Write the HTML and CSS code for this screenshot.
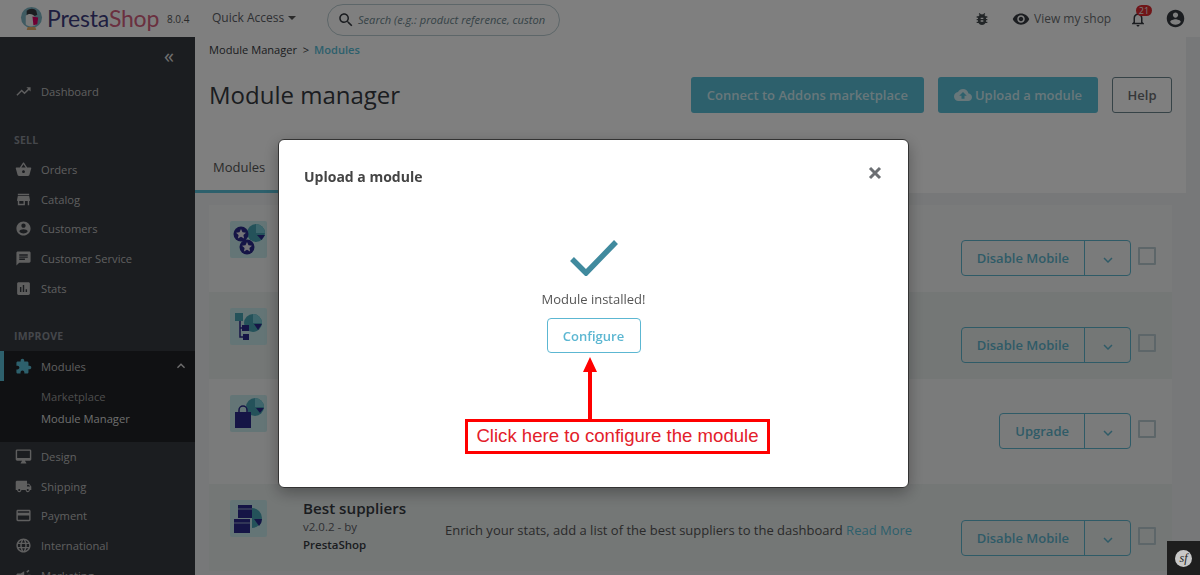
FILE: index.html
```html
<!DOCTYPE html>
<html>
<head>
    <title>Module manager</title>
    <link rel="stylesheet" href="styles.css">
</head>
<body>
    <header class="topbar">
        <svg class="logo" viewBox="0 0 24 26">
            <circle cx="12" cy="12" r="11" fill="#7fb6c4"/>
            <path d="M7 5c3-3 8-3 10 0l1 4-2 1-9 0z" fill="#363a41"/>
            <path d="M6 10c3-3 8-2 9 1l2 8c-2 3-9 3-11 0z" fill="#f4f4f4"/>
            <path d="M13 11l6 1-1 7-4 1z" fill="#df0067"/>
            <path d="M8 22h8l1 3H7z" fill="#e8b06a"/>
        </svg>
        <span class="brand"><b>Presta</b><i>Shop</i></span>
        <span class="version">8.0.4</span>
        <span class="quick">Quick Access <span class="caret"></span></span>
        <div class="search">
            <svg class="ico" viewBox="0 0 24 24"><path d="M15.5 14h-.79l-.28-.27C15.41 12.59 16 11.11 16 9.5 16 5.91 13.09 3 9.5 3S3 5.91 3 9.5 5.91 16 9.5 16c1.61 0 3.09-.59 4.23-1.57l.27.28v.79l5 4.99L20.49 19l-4.99-5zm-6 0C7.01 14 5 11.99 5 9.5S7.01 5 9.5 5 14 7.01 14 9.5 11.99 14 9.5 14z"/></svg>
            <span class="placeholder">Search (e.g.: product reference, custon</span>
        </div>
        <div class="top-right">
            <svg class="ico bug" viewBox="0 0 24 24"><path d="M20 8h-2.81c-.45-.78-1.07-1.45-1.82-1.96L17 4.41 15.59 3l-2.17 2.17C12.96 5.06 12.49 5 12 5c-.49 0-.96.06-1.41.17L8.41 3 7 4.41l1.62 1.63C7.88 6.55 7.26 7.22 6.81 8H4v2h2.09c-.05.33-.09.66-.09 1v1H4v2h2v1c0 .34.04.67.09 1H4v2h2.81c1.04 1.79 2.97 3 5.19 3s4.15-1.21 5.19-3H20v-2h-2.09c.05-.33.09-.66.09-1v-1h2v-2h-2v-1c0-.34-.04-.67-.09-1H20V8zm-6 8h-4v-2h4v2zm0-4h-4v-2h4v2z"/></svg>
            <svg class="ico eye" viewBox="0 0 24 24"><path d="M12 4.5C7 4.5 2.73 7.61 1 12c1.73 4.39 6 7.5 11 7.5s9.27-3.11 11-7.5c-1.73-4.39-6-7.5-11-7.5zM12 17c-2.76 0-5-2.24-5-5s2.24-5 5-5 5 2.24 5 5-2.24 5-5 5zm0-8c-1.66 0-3 1.34-3 3s1.34 3 3 3 3-1.34 3-3-1.34-3-3-3z"/></svg>
            <span class="view-shop">View my shop</span>
            <div class="bell">
                <svg class="ico" viewBox="0 0 24 24"><path d="M12 22c1.1 0 2-.9 2-2h-4c0 1.1.9 2 2 2zm6-6v-5c0-3.07-1.63-5.64-4.5-6.32V4c0-.83-.67-1.5-1.5-1.5s-1.5.67-1.5 1.5v.68C7.64 5.36 6 7.92 6 11v5l-2 2v1h16v-1l-2-2zm-2 1H8v-6c0-2.48 1.51-4.5 4-4.5s4 2.02 4 4.5v6z"/></svg>
                <span class="badge">21</span>
            </div>
            <svg class="ico avatar" viewBox="0 0 24 24"><path d="M12 2C6.48 2 2 6.48 2 12s4.48 10 10 10 10-4.48 10-10S17.52 2 12 2zm0 3c1.66 0 3 1.34 3 3s-1.34 3-3 3-3-1.34-3-3 1.34-3 3-3zm0 14.2c-2.5 0-4.71-1.28-6-3.22.03-1.99 4-3.08 6-3.08 1.99 0 5.97 1.09 6 3.08-1.29 1.94-3.5 3.22-6 3.22z"/></svg>
        </div>
    </header>

    <div class="layout">
        <nav class="sidebar">
            <div class="collapse">«</div>
            <div class="nav-item"><svg viewBox="0 0 24 24"><path d="M16 6l2.29 2.29-4.88 4.88-4-4L2 16.59 3.41 18l6-6 4 4 6.3-6.29L22 12V6z"/></svg>Dashboard</div>

            <div class="nav-title">SELL</div>
            <div class="nav-item"><svg viewBox="0 0 24 24"><path d="M17.21 9l-4.38-6.56c-.19-.28-.51-.42-.83-.42-.32 0-.64.14-.83.43L6.79 9H2c-.55 0-1 .45-1 1 0 .09.01.18.04.27l2.54 9.27c.23.84 1 1.46 1.92 1.46h13c.92 0 1.69-.62 1.93-1.46l2.54-9.27L23 10c0-.55-.45-1-1-1h-4.79zM9 9l3-4.4L15 9H9zm3 8c-1.1 0-2-.9-2-2s.9-2 2-2 2 .9 2 2-.9 2-2 2z"/></svg>Orders</div>
            <div class="nav-item"><svg viewBox="0 0 24 24"><path d="M20 4H4v2h16V4zm1 10v-2l-1-5H4l-1 5v2h1v6h10v-6h4v6h2v-6h1zm-9 4H6v-4h6v4z"/></svg>Catalog</div>
            <div class="nav-item"><svg viewBox="0 0 24 24"><path d="M12 2C6.48 2 2 6.48 2 12s4.48 10 10 10 10-4.48 10-10S17.52 2 12 2zm0 3c1.66 0 3 1.34 3 3s-1.34 3-3 3-3-1.34-3-3 1.34-3 3-3zm0 14.2c-2.5 0-4.71-1.28-6-3.22.03-1.99 4-3.08 6-3.08 1.99 0 5.97 1.09 6 3.08-1.29 1.94-3.5 3.22-6 3.22z"/></svg>Customers</div>
            <div class="nav-item"><svg viewBox="0 0 24 24"><path d="M20 2H4c-1.1 0-1.99.9-1.99 2L2 22l4-4h14c1.1 0 2-.9 2-2V4c0-1.1-.9-2-2-2zM6 9h12v2H6V9zm8 5H6v-2h8v2zm4-6H6V6h12v2z"/></svg>Customer Service</div>
            <div class="nav-item"><svg viewBox="0 0 24 24"><path d="M19 3H5c-1.1 0-2 .9-2 2v14c0 1.1.9 2 2 2h14c1.1 0 2-.9 2-2V5c0-1.1-.9-2-2-2zM9 17H7v-7h2v7zm4 0h-2V7h2v10zm4 0h-2v-4h2v4z"/></svg>Stats</div>

            <div class="nav-title">IMPROVE</div>
            <div class="nav-open">
                <div class="nav-item active">
                    <svg viewBox="0 0 24 24"><path d="M20.5 11H19V7c0-1.1-.9-2-2-2h-4V3.5C13 2.12 11.88 1 10.5 1S8 2.12 8 3.5V5H4c-1.1 0-1.99.9-1.99 2v3.8H3.5c1.49 0 2.7 1.21 2.7 2.7s-1.21 2.7-2.7 2.7H2V20c0 1.1.9 2 2 2h3.8v-1.5c0-1.49 1.21-2.7 2.7-2.7 1.49 0 2.7 1.21 2.7 2.7V22H17c1.1 0 2-.9 2-2v-4h1.5c1.38 0 2.5-1.12 2.5-2.5S21.88 11 20.5 11z"/></svg>
                    Modules
                    <svg class="chev-up" viewBox="0 0 24 24"><path d="M7.41 15.41L12 10.83l4.59 4.58L18 14l-6-6-6 6z"/></svg>
                </div>
                <div class="sub-item">Marketplace</div>
                <div class="sub-item current">Module Manager</div>
            </div>
            <div class="nav-item"><svg viewBox="0 0 24 24"><path d="M21 2H3c-1.1 0-2 .9-2 2v12c0 1.1.9 2 2 2h7l-2 3v1h8v-1l-2-3h7c1.1 0 2-.9 2-2V4c0-1.1-.9-2-2-2zm0 12H3V4h18v10z"/></svg>Design</div>
            <div class="nav-item"><svg viewBox="0 0 24 24"><path d="M20 8h-3V4H3c-1.1 0-2 .9-2 2v11h2c0 1.66 1.34 3 3 3s3-1.34 3-3h6c0 1.66 1.34 3 3 3s3-1.34 3-3h2v-5l-3-4zM6 18.5c-.83 0-1.5-.67-1.5-1.5s.67-1.5 1.5-1.5 1.5.67 1.5 1.5-.67 1.5-1.5 1.5zm13.5-9l1.96 2.5H17V9.5h2.5zm-1.5 9c-.83 0-1.5-.67-1.5-1.5s.67-1.5 1.5-1.5 1.5.67 1.5 1.5-.67 1.5-1.5 1.5z"/></svg>Shipping</div>
            <div class="nav-item"><svg viewBox="0 0 24 24"><path d="M20 4H4c-1.11 0-1.99.89-1.99 2L2 18c0 1.11.89 2 2 2h16c1.11 0 2-.89 2-2V6c0-1.11-.89-2-2-2zm0 14H4v-6h16v6zm0-10H4V6h16v2z"/></svg>Payment</div>
            <div class="nav-item"><svg viewBox="0 0 24 24"><path d="M11.99 2C6.47 2 2 6.48 2 12s4.47 10 9.99 10C17.52 22 22 17.52 22 12S17.52 2 11.99 2zm6.93 6h-2.95c-.32-1.25-.78-2.45-1.38-3.56 1.84.63 3.37 1.91 4.33 3.56zM12 4.04c.83 1.2 1.48 2.53 1.91 3.96h-3.82c.43-1.43 1.08-2.76 1.91-3.96zM4.26 14C4.1 13.36 4 12.69 4 12s.1-1.36.26-2h3.38c-.08.66-.14 1.32-.14 2 0 .68.06 1.34.14 2H4.26zm.82 2h2.95c.32 1.25.78 2.45 1.38 3.56-1.84-.63-3.37-1.9-4.33-3.56zm2.95-8H5.08c.96-1.66 2.49-2.93 4.33-3.56C8.81 5.55 8.35 6.75 8.03 8zM12 19.96c-.83-1.2-1.48-2.53-1.91-3.96h3.82c-.43 1.43-1.08 2.76-1.91 3.96zM14.34 14H9.66c-.09-.66-.16-1.32-.16-2 0-.68.07-1.35.16-2h4.68c.09.65.16 1.32.16 2 0 .68-.07 1.34-.16 2zm.25 5.56c.6-1.11 1.06-2.31 1.38-3.56h2.95c-.96 1.65-2.49 2.93-4.33 3.56zM16.36 14c.08-.66.14-1.32.14-2 0-.68-.06-1.34-.14-2h3.38c.16.64.26 1.31.26 2s-.1 1.36-.26 2h-3.38z"/></svg>International</div>
            <div class="nav-item"><svg viewBox="0 0 24 24"><path d="M18 11v2h4v-2h-4zM16 17.6l3.2 2.4 1.2-1.6-3.2-2.4zM20.4 5.6L19.2 4 16 6.4 17.2 8zM4 9c-1.1 0-2 .9-2 2v2c0 1.1.9 2 2 2h1v4h2v-4h1l5 3V6L8 9H4z"/></svg>Marketing</div>
        </nav>

        <main class="main">
            <section class="head">
                <div class="crumbs">Module Manager &nbsp;&gt; <a>Modules</a></div>
                <div class="head-row">
                    <h1>Module manager</h1>
                    <div class="head-btns">
                        <button class="btn-primary">Connect to Addons marketplace</button>
                        <button class="btn-primary btn-upload">
                            <svg viewBox="0 0 24 24"><path d="M19.35 10.04C18.67 6.59 15.64 4 12 4 9.11 4 6.6 5.64 5.35 8.04 2.34 8.36 0 10.91 0 14c0 3.31 2.69 6 6 6h13c2.76 0 5-2.24 5-5 0-2.64-2.05-4.78-4.65-4.96zM14 13v4h-4v-4H7l5-5 5 5h-3z"/></svg>
                            Upload a module
                        </button>
                        <button class="btn-help">Help</button>
                    </div>
                </div>
                <div class="tabs"><span class="tab">Modules</span></div>
            </section>

            <div class="module-row">
                <svg class="mod-icon" viewBox="0 0 37 37">
                    <rect width="37" height="37" rx="2" fill="#c8ebec"/>
                    <circle cx="26" cy="12" r="9" fill="#49a5b5"/>
                    <path d="M26 12V3a9 9 0 0 1 9 9z" fill="#7ccdd8"/>
                    <path d="M27 14h8l-3.500 5z" fill="#2b2a8c"/>
                    <circle cx="11" cy="13" r="7.500" fill="#2b2a8c"/>
                    <circle cx="17" cy="26" r="7.500" fill="#2b2a8c"/>
                    <path d="M11 8l1.500 3.300 3.500.4-2.600 2.400.7 3.500-3.100-1.800-3.100 1.800.7-3.500-2.600-2.400 3.500-.4zM17 21l1.500 3.300 3.500.4-2.600 2.400.7 3.500-3.100-1.800-3.100 1.800.7-3.500-2.600-2.400 3.500-.4z" fill="#e8e8f0"/>
                </svg>
                <div class="row-actions">
                    <div class="btn-group"><span class="btn-main">Disable Mobile</span><span class="btn-toggle"><svg viewBox="0 0 24 24"><path d="M7.41 8.59L12 13.17l4.59-4.58L18 10l-6 6-6-6z"/></svg></span></div>
                    <span class="check"></span>
                </div>
            </div>
            <div class="module-row alt">
                <svg class="mod-icon" viewBox="0 0 37 37">
                    <rect width="37" height="37" rx="2" fill="#c8ebec"/>
                    <circle cx="23" cy="15" r="9" fill="#49a5b5"/>
                    <path d="M23 15V6a9 9 0 0 1 9 9z" fill="#7ccdd8"/>
                    <path d="M24 16h8l-4 6z" fill="#2b2a8c"/>
                    <rect x="5" y="5" width="8" height="8" fill="#49a5b5"/>
                    <path d="M10 13v16h3M10 20h3" stroke="#2b2a8c" stroke-width="1.500" fill="none"/>
                    <rect x="12" y="17" width="7" height="6" fill="#2b2a8c"/>
                    <rect x="13" y="26" width="6" height="6" fill="#2b2a8c"/>
                </svg>
                <div class="row-actions">
                    <div class="btn-group"><span class="btn-main">Disable Mobile</span><span class="btn-toggle"><svg viewBox="0 0 24 24"><path d="M7.41 8.59L12 13.17l4.59-4.58L18 10l-6 6-6-6z"/></svg></span></div>
                    <span class="check"></span>
                </div>
            </div>
            <div class="module-row tall">
                <svg class="mod-icon" viewBox="0 0 37 37">
                    <rect width="37" height="37" rx="2" fill="#c8ebec"/>
                    <circle cx="25" cy="12" r="9" fill="#49a5b5"/>
                    <path d="M25 12V3a9 9 0 0 1 9 9z" fill="#7ccdd8"/>
                    <path d="M26 13h8l-4 5z" fill="#2b2a8c"/>
                    <rect x="5" y="17" width="16" height="16" fill="#2b2a8c"/>
                    <path d="M9 18v-3a4 4 0 0 1 8 0v3" stroke="#2b2a8c" stroke-width="1.500" fill="none"/>
                </svg>
                <div class="row-actions">
                    <div class="btn-group"><span class="btn-main">Upgrade</span><span class="btn-toggle"><svg viewBox="0 0 24 24"><path d="M7.41 8.59L12 13.17l4.59-4.58L18 10l-6 6-6-6z"/></svg></span></div>
                    <span class="check"></span>
                </div>
            </div>
            <div class="module-row alt last">
                <svg class="mod-icon" viewBox="0 0 37 37">
                    <rect width="37" height="37" rx="2" fill="#c8ebec"/>
                    <path d="M22 8a10 10 0 0 1 0 20z" fill="#49a5b5"/>
                    <path d="M24 19h8a10 10 0 0 1-3 7z" fill="#2b2a8c"/>
                    <rect x="8" y="5" width="14" height="13" fill="#2b2a8c"/>
                    <rect x="4" y="19" width="16" height="14" fill="#2b2a8c"/>
                    <path d="M8 9h14M4 23h16" stroke="#c8ebec" stroke-width=".7"/>
                </svg>
                <div class="mod-info">
                    <div class="mod-name">Best suppliers</div>
                    <div class="mod-ver">v2.0.2 - by</div>
                    <div class="mod-author">PrestaShop</div>
                </div>
                <div class="mod-desc">Enrich your stats, add a list of the best suppliers to the dashboard <a>Read More</a></div>
                <div class="row-actions">
                    <div class="btn-group"><span class="btn-main">Disable Mobile</span><span class="btn-toggle"><svg viewBox="0 0 24 24"><path d="M7.41 8.59L12 13.17l4.59-4.58L18 10l-6 6-6-6z"/></svg></span></div>
                    <span class="check"></span>
                </div>
            </div>
        </main>
    </div>

    <div class="overlay">
        <div class="modal">
            <div class="modal-head">
                <h4>Upload a module</h4>
                <svg class="close" viewBox="0 0 14 14"><path d="M2 2l10 10M12 2L2 12" stroke="#6c6f73" stroke-width="3"/></svg>
            </div>
            <div class="modal-body">
                <svg class="tick" viewBox="0 0 48 36"><path d="M2 19l14 14L46 2" fill="none" stroke="#408a9e" stroke-width="5.500"/></svg>
                <p>Module installed!</p>
                <button class="btn-configure">Configure</button>
            </div>
            <!-- annotation drawn on top of the screenshot -->
            <svg class="arrow" viewBox="0 0 14 62"><path d="M7 0l7 15H9v47H5V15H0z" fill="#f00"/></svg>
            <div class="callout">Click here to configure the module</div>
        </div>
    </div>

    <div class="sf-bar"><span class="sf-logo">sf</span></div>
</body>
</html>
```

FILE: styles.css
```css
* {
    box-sizing: border-box;
}
html, body {
    height: 100%;
}
body {
    margin: 0;
    height: 575px;
    overflow: hidden;
    background: #eff1f2;
    color: #363a41;
    font-family: "Open Sans", "Noto Sans", sans-serif;
    font-size: 12px;
}
svg {
    fill: currentColor;
    flex-shrink: 0;
}

/* top bar */
.topbar {
    display: flex;
    align-items: center;
    height: 37px;
    padding-left: 20px;
    background: #fff;
}
.logo {
    width: 23px;
    height: 25px;
    margin-right: 4px;
}
.brand {
    width: 120px;
    margin-top: -2px;
    font-family: Lato, sans-serif;
    font-size: 23px;
    letter-spacing: -0.2px;
}
.brand b {
    font-weight: 400;
    color: #3d3c7e;
}
.brand i {
    font-style: normal;
    color: #d5607f;
}
.version {
    width: 45px;
    font-size: 10px;
    color: #555;
}
.quick {
    width: 115px;
    margin-top: -2px;
    font-size: 12px;
    color: #5d6066;
}
.caret {
    display: inline-block;
    margin-left: 1px;
    vertical-align: 2px;
    border-top: 4px solid #555;
    border-left: 4px solid transparent;
    border-right: 4px solid transparent;
}
.search {
    display: flex;
    align-items: center;
    width: 233px;
    height: 32px;
    margin-top: 3px;
    padding-left: 9px;
    border: 1px solid #bbcdd2;
    border-radius: 16px;
    overflow: hidden;
}
.search .ico {
    width: 18px;
    height: 18px;
    margin-right: 3px;
    color: #363a41;
}
.placeholder {
    margin-top: -2px;
    font-style: italic;
    font-size: 11.100px;
    white-space: nowrap;
    color: #6c868e;
}
.top-right {
    display: flex;
    align-items: center;
    margin-left: auto;
    padding-right: 14px;
    color: #6c868e;
}
.ico {
    width: 18px;
    height: 18px;
}
.bug {
    width: 16px;
    height: 16px;
    margin-right: 22px;
    color: #444b4f;
}
.eye {
    margin-right: 4px;
    color: #363a41;
}
.view-shop {
    width: 95px;
    font-size: 12px;
    margin-top: -1px;
    color: #6c6f73;
}
.bell {
    position: relative;
    height: 18px;
    margin-right: 18px;
}
.bell .ico {
    color: #363a41;
}
.badge {
    position: absolute;
    top: -5px;
    left: 7px;
    width: 16px;
    height: 11px;
    border-radius: 6px;
    background: #e02a30;
    color: #eee;
    font-size: 9px;
    line-height: 11px;
    text-align: center;
}
.avatar {
    width: 21px;
    height: 21px;
    color: #363a41;
}

/* page layout */
.layout {
    display: flex;
    height: 538px;
}
.sidebar {
    width: 195px;
    flex-shrink: 0;
    overflow: hidden;
    background: #363a41;
    color: #bebebe;
}
.collapse {
    height: 40px;
    padding: 6px 21px 0 0;
    text-align: right;
    font-size: 20px;
    line-height: 26px;
    color: #e0e0e0;
}
.nav-title {
    margin-top: 20px;
    height: 28px;
    padding-left: 14px;
    font-size: 10.500px;
    line-height: 26px;
    font-weight: 700;
    letter-spacing: 0.2px;
    color: #8a8f96;
}
.nav-item {
    display: flex;
    align-items: center;
    height: 29.700px;
    padding-left: 15px;
    font-size: 11.200px;
}
.nav-item svg {
    width: 17px;
    height: 17px;
    margin-right: 9px;
}
.nav-open {
    height: 90.500px;
    background: #202226;
}
.nav-item.active {
    height: 30px;
    border-left: 4px solid #5ac0d8;
    padding-left: 11px;
}
.nav-item.active svg:first-child {
    color: #5ac0d8;
}
.nav-item .chev-up {
    width: 16px;
    height: 16px;
    margin: 0 6px 0 auto;
    color: #ddd;
}
.sub-item {
    height: 22px;
    padding-left: 41px;
    font-size: 11.200px;
    line-height: 22px;
    color: #9b9b9b;
}
.nav-item + .sub-item {
    margin-top: 5px;
}
.sub-item.current {
    color: #dcdcdc;
}

/* main column */
.main {
    flex: 1;
    overflow: hidden;
}
.head {
    width: 991px;
    height: 156px;
    padding: 0 14px;
    background: #fff;
}
.crumbs {
    padding-top: 4px;
    font-size: 11.100px;
    line-height: 17px;
}
.crumbs a {
    margin-left: 2px;
    color: #5ac0d8;
    font-weight: 600;
}
.head-row {
    display: flex;
    justify-content: space-between;
    height: 36px;
    margin-top: 20px;
}
h1 {
    margin: -1px 0 0;
    font-size: 24px;
    font-weight: 400;
    line-height: 36px;
}
.head-btns {
    display: flex;
    gap: 14px;
    margin-top: -1px;
}
button {
    font-family: inherit;
}
.btn-primary {
    display: flex;
    align-items: center;
    height: 36px;
    padding: 0 16px;
    border: none;
    border-radius: 3px;
    background: #5ac0d8;
    color: #d0eef5;
    font-size: 13px;
    font-weight: 600;
}
.btn-upload svg {
    width: 18px;
    height: 18px;
    margin-right: 3px;
}
.btn-help {
    width: 60px;
    height: 36px;
    border: 1px solid #6c868e;
    border-radius: 3px;
    background: #fff;
    color: #6c6f73;
    font-size: 13px;
    font-weight: 600;
}
.tabs {
    display: flex;
    height: 42px;
    margin: 37px -14px 0;
}
.tab {
    width: 100px;
    padding: 5px 0 0 18px;
    border-bottom: 3px solid #5ac0d8;
    font-size: 13px;
    line-height: 22px;
    color: #555;
}

/* module list */
.module-row {
    display: flex;
    align-items: flex-start;
    width: 963px;
    height: 87px;
    margin-left: 14px;
    padding: 16px 16px 0 21px;
    background: #f5f6f6;
}
.module-row:first-of-type {
    margin-top: 12px;
}
.module-row.alt {
    background: #e9eeed;
}
.module-row.tall {
    height: 105px;
}
.mod-icon {
    width: 37px;
    height: 37px;
    margin-right: 36px;
}
.mod-info {
    width: 142px;
}
.mod-name {
    margin-top: -1px;
    font-size: 15.200px;
    font-weight: 600;
    line-height: 18px;
}
.mod-ver {
    margin-top: 1px;
    font-size: 11.500px;
    line-height: 18px;
    color: #5d6066;
}
.mod-author {
    font-size: 11.500px;
    font-weight: 600;
    line-height: 18px;
}
.mod-desc {
    margin-top: 21px;
    font-size: 13px;
    line-height: 18px;
    color: #555;
}
.mod-desc a {
    color: #5ac0d8;
}
.row-actions {
    display: flex;
    margin: 19px 0 0 auto;
}
.tall .row-actions {
    margin-top: 18px;
}
.last .row-actions {
    margin-top: 20px;
}
.btn-group {
    display: flex;
    height: 36px;
    border: 1px solid #5fb6cf;
    border-radius: 4px;
    color: #5fb6cf;
    font-size: 13px;
    font-weight: 600;
    line-height: 34px;
}
.btn-main {
    padding: 0 15px;
}
.btn-toggle {
    width: 46px;
    border-left: 1px solid #5fb6cf;
    text-align: center;
}
.btn-toggle svg {
    width: 18px;
    height: 18px;
    margin-top: 10px;
}
.check {
    width: 18px;
    height: 18px;
    margin: 7px 0 0 7px;
    border: 2px solid #bbcdd2;
    border-radius: 1px;
}

/* dimmed overlay and dialog */
.overlay {
    position: fixed;
    inset: 0;
    display: flex;
    align-items: flex-start;
    padding: 139px 0 0 278px;
    background: rgba(0, 0, 0, 0.5);
}
.modal {
    position: relative;
    width: 631px;
    height: 349px;
    border: 1px solid #333;
    border-radius: 6px;
    background: #fff;
    box-shadow: 0 5px 15px rgba(0, 0, 0, 0.3);
}
.modal-head {
    display: flex;
    justify-content: space-between;
    padding: 26px 26px 0 25px;
}
h4 {
    margin: 0;
    font-size: 14px;
    font-weight: 700;
    line-height: 22px;
    color: #444;
}
.close {
    width: 14px;
    height: 14px;
}
.modal-body {
    display: flex;
    flex-direction: column;
    align-items: center;
    padding-top: 52px;
}
.tick {
    width: 48px;
    height: 36px;
}
p {
    margin: 14px 0 10px;
    font-size: 13px;
    line-height: 18px;
    color: #555;
}
.btn-configure {
    width: 94px;
    height: 35px;
    border: 1px solid #5cb7d2;
    border-radius: 4px;
    background: #fff;
    color: #5cb7d2;
    font-size: 13px;
    font-weight: 600;
}
.arrow {
    position: absolute;
    left: 304px;
    top: 217px;
    width: 14px;
    height: 62px;
}
.callout {
    position: absolute;
    left: 186px;
    top: 279px;
    width: 305px;
    height: 35px;
    border: 3px solid #f00;
    font-family: "Liberation Sans", Arial, sans-serif;
    font-size: 18.600px;
    line-height: 27px;
    white-space: nowrap;
    text-align: center;
    color: #e3202a;
    background: #fff;
}

/* debug toolbar corner */
.sf-bar {
    position: fixed;
    right: 0;
    bottom: 0;
    display: flex;
    align-items: center;
    justify-content: center;
    width: 33px;
    height: 34px;
    background: #1e1e1e;
}
.sf-logo {
    width: 17px;
    height: 17px;
    border-radius: 50%;
    background: #c8c8c8;
    color: #1e1e1e;
    font-family: "Liberation Serif", serif;
    font-style: italic;
    font-size: 12px;
    line-height: 16px;
    text-align: center;
}
```
